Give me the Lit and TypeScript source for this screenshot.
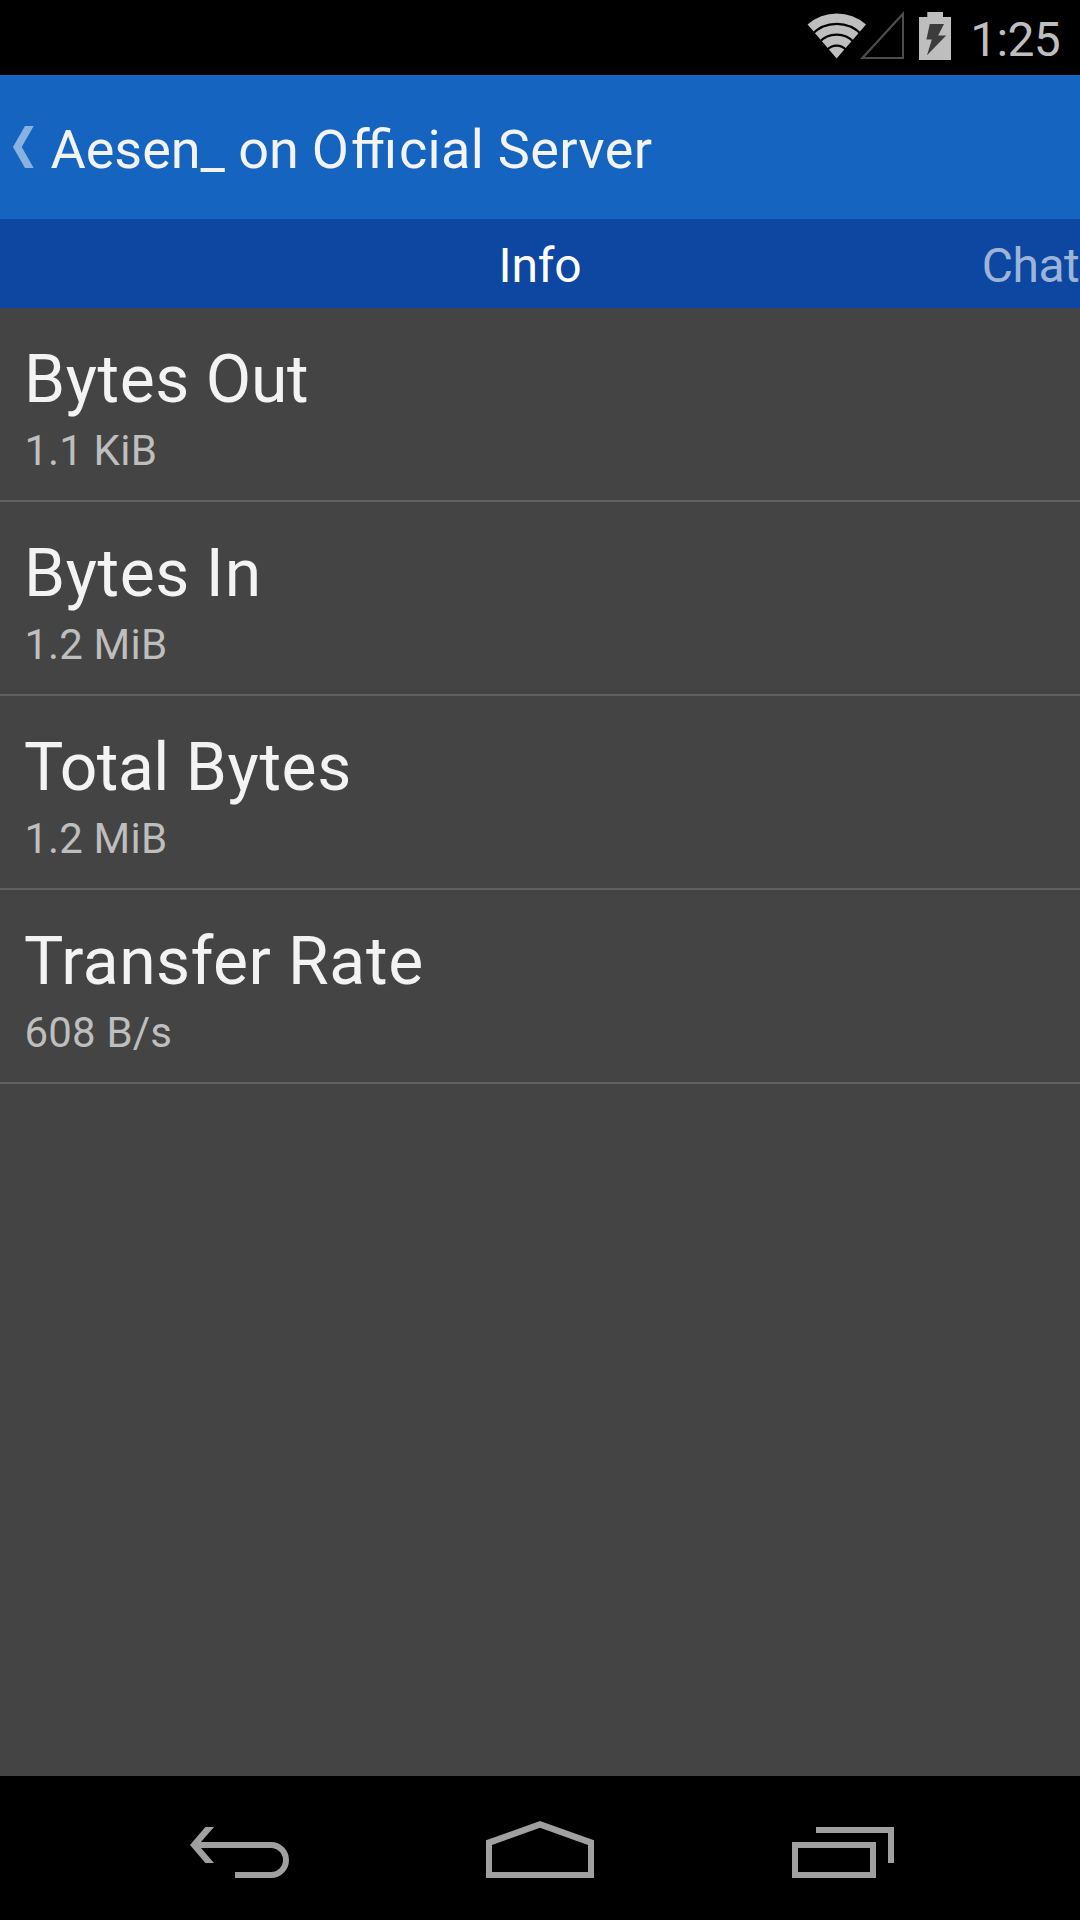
import { LitElement, html, css } from "lit";
import { customElement, property } from "lit/decorators.js";
import { styleMap } from "lit/directives/style-map.js";

/** A run of text and the letter spacing, in pixels, that it is set with. */
type Run = [text: string, tracking: number];

interface Stat {
  label: Run[];
  value: Run[];
}

const TITLE: Run[] = [["Aesen_ ", 0], ["on ", -0.2], ["Offi", 2], ["cial ", 0.3], ["Server", 0.4]];

const STATS: Stat[] = [
  { label: [["Bytes", 0.6], [" ", -0.7], ["Out", -0.2]], value: [["1.1 ", 0.1], ["KiB", 0.4]] },
  { label: [["Bytes", 0.6], [" ", -0.7], ["In", 1]], value: [["1.2 ", 0.1], ["MiB", 0.3]] },
  { label: [["Total", -0.5], [" ", 0.6], ["Bytes", 0.6]], value: [["1.2 ", 0.1], ["MiB", 0.3]] },
  { label: [["Transfer ", 0.4], ["Rate", 0.7]], value: [["608 ", 0.2], ["B/s", 0.2]] },
];

const runs = (list: Run[]) =>
  list.map(
    ([text, tracking]) =>
      html`<span style=${styleMap(tracking ? { letterSpacing: `${tracking}px` } : {})}>${text}</span>`
  );

@customElement("status-bar")
export class StatusBar extends LitElement {
  static styles = css`
    :host {
      display: flex;
      justify-content: flex-end;
      height: 75px;
      box-sizing: border-box;
      padding-right: 20px;
      background: #000;
      color: #bebebe;
    }
    .icons {
      display: block;
      margin-right: 10px;
    }
    .clock {
      padding-top: 11px;
      font-size: 48px;
      line-height: 57px;
      letter-spacing: -0.7px;
    }
  `;

  render() {
    return html`
      <svg class="icons" width="160" height="75" viewBox="800 0 160 75">
        <path d="M836.6 58.4 807.6 24.4A44.3 44.3 0 0 1 866 24.4Z" fill="#bebebe" />
        <g fill="none" stroke="#000" stroke-width="2.2">
          <path d="M811.8 34.6A34.2 34.2 0 0 1 861.6 34.6" />
          <path d="M819.1 42.4A23.7 23.7 0 0 1 854.1 42.4" />
          <path d="M827 50A12.8 12.8 0 0 1 846.2 50" />
        </g>
        <path d="M860 59 904 11V59ZM864.8 57H902V16.4Z" fill="#4d4d4d" fill-rule="evenodd" />
        <path d="M927.3 12H943V17H951V60H919V17H927.3Z" fill="#bebebe" />
        <path d="M929.8 24H944L938.2 35.5H946.2L927 55.2 931.8 39.5H926.4Z" fill="#3c3c3c" />
      </svg>
      <div class="clock">1:25</div>
    `;
  }
}

@customElement("action-bar")
export class ActionBar extends LitElement {
  @property({ attribute: false }) heading: Run[] = [];

  static styles = css`
    :host {
      display: flex;
      height: 144px;
      box-sizing: border-box;
      background: #1565c0;
      color: #f3f3f3;
    }
    .up {
      display: block;
      flex: none;
      margin-right: -0.6px;
    }
    .title {
      margin: 0;
      padding-top: 43px;
      font-size: 54px;
      font-weight: 400;
      line-height: 63px;
      white-space: pre;
      font-feature-settings: "liga" 1;
    }
  `;

  render() {
    return html`
      <svg class="up" width="51" height="144" viewBox="0 75 51 144">
        <path d="M25 126H33.7L21.7 147 33.7 168H25L13 147Z" fill="#8ab2e0" />
      </svg>
      <h1 class="title">${runs(this.heading)}</h1>
    `;
  }
}

@customElement("tab-strip")
export class TabStrip extends LitElement {
  static styles = css`
    :host {
      display: grid;
      grid-template-columns: 1fr auto 1fr;
      height: 89px;
      box-sizing: border-box;
      padding-top: 18px;
      background: #0d47a1;
      font-size: 48px;
      line-height: 57px;
    }
    .current {
      grid-column: 2;
      letter-spacing: -0.2px;
      color: #fff;
    }
    .next {
      justify-self: end;
      padding-right: 0.8px;
      letter-spacing: -0.5px;
      color: rgba(255, 255, 255, 0.6);
    }
  `;

  render() {
    return html`
      <span class="current">Info</span>
      <span class="next">Chat</span>
    `;
  }
}

@customElement("nav-bar")
export class NavBar extends LitElement {
  static styles = css`
    :host {
      display: flex;
      justify-content: center;
      gap: 160px;
      height: 144px;
      background: #000;
      color: #a0a0a0;
    }
    .key {
      display: block;
    }
  `;

  render() {
    return html`
      <svg class="key" width="140" height="144" viewBox="170 1776 140 144">
        <path d="M190 1845 205.4 1827H214L201 1842V1848L214 1863H205.4Z" fill="currentColor" />
        <path d="M198 1845H271A15 15 0 0 1 271 1875H235" fill="none" stroke="currentColor" stroke-width="6" />
      </svg>
      <svg class="key" width="140" height="144" viewBox="470 1776 140 144">
        <path
          d="M486 1840.3 540 1821 594 1840.3V1878H486ZM492 1845V1872H588V1845L540 1827.7Z"
          fill="currentColor"
          fill-rule="evenodd"
        />
      </svg>
      <svg class="key" width="140" height="144" viewBox="770 1776 140 144">
        <path d="M816 1830H891V1863M795 1845H873V1875H795Z" fill="none" stroke="currentColor" stroke-width="6" />
      </svg>
    `;
  }
}

@customElement("app-root")
export class AppRoot extends LitElement {
  static styles = css`
    :host {
      display: flex;
      flex-direction: column;
      width: 1080px;
      height: 1920px;
      overflow: hidden;
      background: #444;
      font-family: Roboto, sans-serif;
    }
    .stats {
      flex: 1;
      margin: 0;
      padding: 0;
      list-style: none;
    }
    .row {
      display: flex;
      flex-direction: column;
      gap: 8px;
      height: 194px;
      box-sizing: border-box;
      padding: 33px 24px 0;
      border-bottom: 2px solid #606060;
    }
    .label,
    .value {
      white-space: pre;
    }
    .label {
      color: #f3f3f3;
      font-size: 66px;
      line-height: 77px;
    }
    .value {
      padding-left: 0.4px;
      color: #bebebe;
      font-size: 42px;
      line-height: 49px;
    }
  `;

  render() {
    return html`
      <status-bar></status-bar>
      <action-bar .heading=${TITLE}></action-bar>
      <tab-strip></tab-strip>
      <ul class="stats">
        ${STATS.map(
          (stat) => html`
            <li class="row">
              <div class="label">${runs(stat.label)}</div>
              <div class="value">${runs(stat.value)}</div>
            </li>
          `
        )}
      </ul>
      <nav-bar></nav-bar>
    `;
  }
}
